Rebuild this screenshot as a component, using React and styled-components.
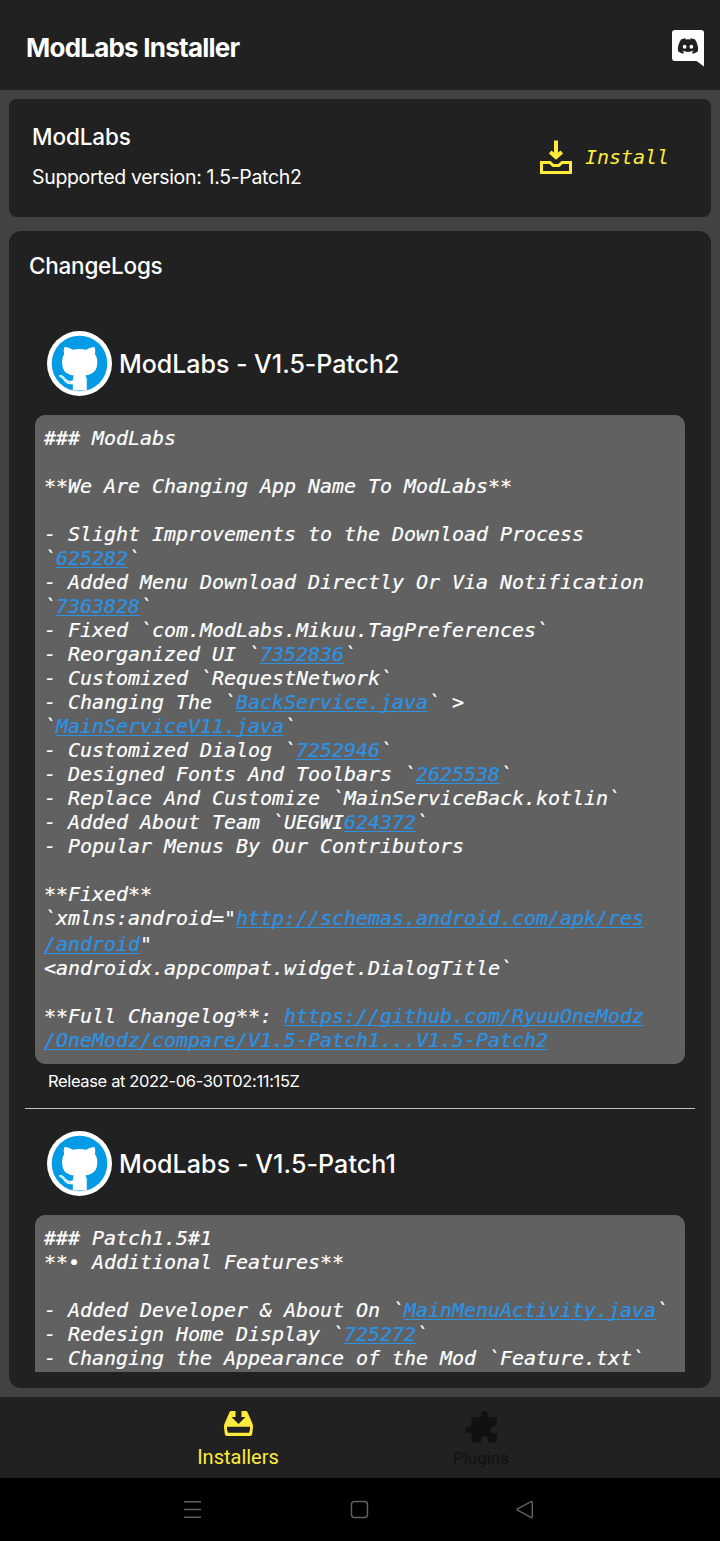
import React from "react";
import styled, { createGlobalStyle } from "styled-components";
import { FaDiscord } from "react-icons/fa";

const GlobalStyle = createGlobalStyle`
  * { box-sizing: border-box; }
  body { margin: 0; background: #000; }
`;

const Screen = styled.div`
  width: 720px;
  height: 1541px;
  display: flex;
  flex-direction: column;
  overflow: hidden;
  background: #424242;
  color: #fff;
  font-family: Inter, "Liberation Sans", sans-serif;
`;

const Toolbar = styled.header`
  height: 90px;
  flex: none;
  display: flex;
  align-items: center;
  justify-content: space-between;
  padding: 6px 16px 0 26px;
  background: #212121;
`;

const AppTitle = styled.h1`
  margin: 0;
  padding-bottom: 2px;
  font-size: 26px;
  font-weight: 700;
  letter-spacing: -0.77px;
`;

const Content = styled.main`
  flex: 1;
  min-height: 0;
  display: flex;
  flex-direction: column;
  gap: 14px;
  padding: 9px;
`;

const InstallCard = styled.section`
  height: 118px;
  flex: none;
  display: flex;
  justify-content: space-between;
  align-items: center;
  padding: 0 42px 3px 23px;
  border-radius: 8px;
  background: #212121;
`;

const AppName = styled.h2`
  margin: 0;
  padding-bottom: 2px;
  font-size: 22.5px;
  line-height: 38px;
  font-weight: 500;
  letter-spacing: -0.1px;
`;

const Version = styled.p`
  margin: 0;
  font-size: 19.5px;
  line-height: 38px;
  letter-spacing: -0.33px;
`;

const InstallButton = styled.button`
  display: flex;
  align-items: center;
  gap: 13px;
  padding: 0;
  border: 0;
  background: none;
  color: #ffeb3b;
  font: italic 20px/24px "DejaVu Sans Mono", monospace;
  letter-spacing: -0.042px;
`;

const LogCard = styled.section`
  flex: 1;
  min-height: 0;
  display: flex;
  flex-direction: column;
  padding: 0 16px 16px;
  border-radius: 12px;
  background: #212121;
`;

const LogHeading = styled.h2`
  margin: 0 0 27px;
  padding: 20px 0 0 4px;
  font-size: 22.5px;
  line-height: 30px;
  font-weight: 500;
  letter-spacing: -0.24px;
`;

const LogList = styled.div`
  flex: 1;
  min-height: 0;
  overflow: hidden;
`;

const Release = styled.article`
  margin-bottom: -1px;
  padding: 22px 10px 0;
  border-bottom: 1px solid #bdbdbd;
`;

const ReleaseHead = styled.div`
  display: flex;
  align-items: center;
  gap: 7px;
  padding-left: 12px;
  height: 67px;
  margin: 0 0 18px;
  padding-bottom: 1px;
`;

const ReleaseTitle = styled.h3`
  margin: 0;
  padding-top: 2px;
  font-size: 25px;
  font-weight: 500;
  letter-spacing: ${(p) => p.$track}px;
`;

const Notes = styled.div`
  padding: 11px 9px 12px;
  border-radius: 10px;
  background: #616161;
  font: italic 20px/24px "DejaVu Sans Mono", monospace;
  letter-spacing: -0.042px;
  -webkit-text-stroke: 0.2px;
`;

const NoteLine = styled.div`
  height: ${(p) => (p.$tall ? 26 : 24)}px;
  padding-top: ${(p) => (p.$tall ? 2 : 0)}px;
  white-space: pre;
`;

const NoteLink = styled.a`
  color: #2b93e6;
  text-decoration: underline;
  text-decoration-thickness: 1.4px;
  text-underline-offset: 2px;
  text-decoration-skip-ink: none;
`;

const ReleaseDate = styled.p`
  margin: 0;
  padding: 5px 0 15px 13px;
  font-size: 16.5px;
  line-height: 24px;
  letter-spacing: -0.36px;
`;

const BottomNav = styled.nav`
  height: 81px;
  flex: none;
  display: flex;
  justify-content: center;
  padding: 14px 1px 0 0;
  background: #212121;
  font-family: Roboto, sans-serif;
`;

const Tab = styled.div`
  width: 243px;
  display: flex;
  flex-direction: column;
  align-items: center;
  color: ${(p) => (p.$active ? "#ffeb3b" : "#111")};
  font-size: ${(p) => (p.$active ? 20 : 17)}px;
  line-height: ${(p) => (p.$active ? 28 : 30)}px;
`;

const TabIcon = styled.div`
  height: 32px;
  display: flex;
  align-items: flex-start;
`;

const SystemBar = styled.div`
  height: 63px;
  flex: none;
  display: flex;
  align-items: center;
  justify-content: space-between;
  padding: 0 185px 0 183px;
  background: #000;
`;

const SystemIcon = styled.svg`
  width: 19px;
  height: 19px;
  fill: none;
  stroke: #626262;
  stroke-width: 1.4;
`;

const DiscordLogo = () => (
  <svg width="32" height="37" viewBox="0 0 32 37">
    <path fill="#fff" d="M3 0H29Q32 0 32 3V36.5L24.5 31H3Q0 31 0 28V3Q0 0 3 0Z" />
    <FaDiscord x={5} y={5} size={22} color="#212121" />
  </svg>
);

const TrayDownIcon = () => (
  <svg width="32" height="34" viewBox="0 0 32 34" fill="none" stroke="currentColor">
    <path strokeWidth="4" d="M16 0.5V16" />
    <path strokeWidth="4" d="M10.2 12L16 17L21.8 12" />
    <path strokeWidth="3" d="M1.5 32.5V22.5H10L13.2 25.6H18.8L22 22.5H30.5V32.5Z" />
  </svg>
);

const InstallersIcon = () => (
  <svg width="29" height="25" viewBox="0 0 29 25" fill="currentColor">
    <path
      fillRule="evenodd"
      d="M7 0H11.5V6H7.5L14.5 13L21.5 6H17.5V0H22Q23 0 23.5 1.2L28 11.5Q29 13.5 29 16L28.2 23Q28 25 26 25H3Q1 25 .8 23L0 16Q0 13.5 1 11.5L5.5 1.2Q6 0 7 0ZM3 15.8V18.5L4 21.8H25L26 18.5V15.8Z"
    />
  </svg>
);

const PuzzleIcon = () => (
  <svg width="32" height="32" viewBox="-0.5 0 32 32" fill="currentColor">
    <path d="M9 6H15.8V3.2A3.2 3.2 0 0 1 22.2 3.2V6H28.5Q31.5 6 31.5 9V15H29A3.8 3.8 0 0 0 29 22.6H31.5V28.5Q31.5 31.5 28.5 31.5H22.6V28.6A3.6 3.6 0 0 0 15.4 28.6V31.5H9Q6 31.5 6 28.5V22H3.2A3.2 3.2 0 0 1 3.2 15.6H6V9Q6 6 9 6Z" />
  </svg>
);

const GithubAvatar = () => (
  <svg width="65" height="65" viewBox="0 0 65 65">
    <circle cx="32.5" cy="32.5" r="32.5" fill="#fff" />
    <circle cx="32.5" cy="32.5" r="27.8" fill="#039be5" />
    <path
      fill="#fff"
      d="M17.3 16.2Q18 15.6 20 16.2Q23 17 25.7 18.8Q32.5 17.2 39.3 18.8Q42 17 45 16.2Q47 15.6 47.6 16.2Q48.8 19.5 47.9 23Q50.4 26 50.4 30.5Q50.4 36 48.2 39.5Q45.2 43.6 38.4 44.5Q39.8 46.5 39.8 49V59.5H25.8V53.2Q19.5 54 17 49.5Q15.5 46.7 12.3 45.4Q11.6 43.8 14 44Q16.5 44.4 18.5 47.5Q21 51 25.8 49.5Q25.6 46.8 26.8 44.5Q20 43.7 17 39.5Q15 36 15 30.5Q15 26 17.2 23Q16.2 19.5 17.3 16.2Z"
    />
    <path fill="none" stroke="#039be5" strokeWidth="1" strokeDasharray="1.1 2" d="M15 45.8Q17 46.3 18.6 49.3Q21 52.3 25 51.3" />
  </svg>
);

/* Text between [[ and ]] is a link; a leading ^ marks a line with extra leading. */
const releases = [
  {
    title: "ModLabs - V1.5-Patch2",
    track: -0.04,
    date: "Release at 2022-06-30T02:11:15Z",
    lines: [
      "### ModLabs",
      "",
      "**We Are Changing App Name To ModLabs**",
      "",
      "- Slight Improvements to the Download Process",
      "`[[625282]]`",
      "- Added Menu Download Directly Or Via Notification",
      "`[[7363828]]`",
      "- Fixed `com.ModLabs.Mikuu.TagPreferences`",
      "- Reorganized UI `[[7352836]]`",
      "- Customized `RequestNetwork`",
      "- Changing The `[[BackService.java]]` >",
      "`[[MainServiceV11.java]]`",
      "- Customized Dialog `[[7252946]]`",
      "- Designed Fonts And Toolbars `[[2625538]]`",
      "- Replace And Customize `MainServiceBack.kotlin`",
      "- Added About Team `UEGWI[[624372]]`",
      "- Popular Menus By Our Contributors",
      "",
      "**Fixed**",
      '`xmlns:android="[[http://schemas.android.com/apk/res]]',
      '^[[/android]]"',
      "<androidx.appcompat.widget.DialogTitle`",
      "",
      "**Full Changelog**: [[https://github.com/RyuuOneModz]]",
      "[[/OneModz/compare/V1.5-Patch1...V1.5-Patch2]]",
    ],
  },
  {
    title: "ModLabs - V1.5-Patch1",
    track: 0.08,
    lines: [
      "### Patch1.5#1",
      "**• Additional Features**",
      "",
      "- Added Developer & About On `[[MainMenuActivity.java]]`",
      "- Redesign Home Display `[[725272]]`",
      "- Changing the Appearance of the Mod `Feature.txt`",
    ],
  },
];

const Line = ({ text }) => {
  const tall = text.startsWith("^");
  const parts = (tall ? text.slice(1) : text).split(/\[\[|\]\]/);
  return (
    <NoteLine $tall={tall}>
      {parts.map((part, i) => (i % 2 ? <NoteLink key={i}>{part}</NoteLink> : part))}
    </NoteLine>
  );
};

export default function App() {
  return (
    <Screen>
      <GlobalStyle />
      <Toolbar>
        <AppTitle>ModLabs Installer</AppTitle>
        <DiscordLogo />
      </Toolbar>
      <Content>
        <InstallCard>
          <div>
            <AppName>ModLabs</AppName>
            <Version>Supported version: 1.5-Patch2</Version>
          </div>
          <InstallButton>
            <TrayDownIcon />
            Install
          </InstallButton>
        </InstallCard>
        <LogCard>
          <LogHeading>ChangeLogs</LogHeading>
          <LogList>
            {releases.map((r) => (
              <Release key={r.title}>
                <ReleaseHead>
                  <GithubAvatar />
                  <ReleaseTitle $track={r.track}>{r.title}</ReleaseTitle>
                </ReleaseHead>
                <Notes>
                  {r.lines.map((text, i) => (
                    <Line key={i} text={text} />
                  ))}
                </Notes>
                {r.date && <ReleaseDate>{r.date}</ReleaseDate>}
              </Release>
            ))}
          </LogList>
        </LogCard>
      </Content>
      <BottomNav>
        <Tab $active>
          <TabIcon>
            <InstallersIcon />
          </TabIcon>
          Installers
        </Tab>
        <Tab>
          <TabIcon>
            <PuzzleIcon />
          </TabIcon>
          Plugins
        </Tab>
      </BottomNav>
      <SystemBar>
        <SystemIcon viewBox="0 0 19 19">
          <path d="M1 1.7H18M1 9.5H18M1 17.3H18" />
        </SystemIcon>
        <SystemIcon viewBox="0 0 19 19">
          <rect x="1.5" y="1.5" width="16" height="16" rx="3" />
        </SystemIcon>
        <SystemIcon viewBox="0 0 19 19">
          <path d="M15 1.6Q16.3 1 16.3 2.6V16.4Q16.3 18 15 17.3L1.5 10.2Q.3 9.5 1.5 8.8Z" />
        </SystemIcon>
      </SystemBar>
    </Screen>
  );
}
